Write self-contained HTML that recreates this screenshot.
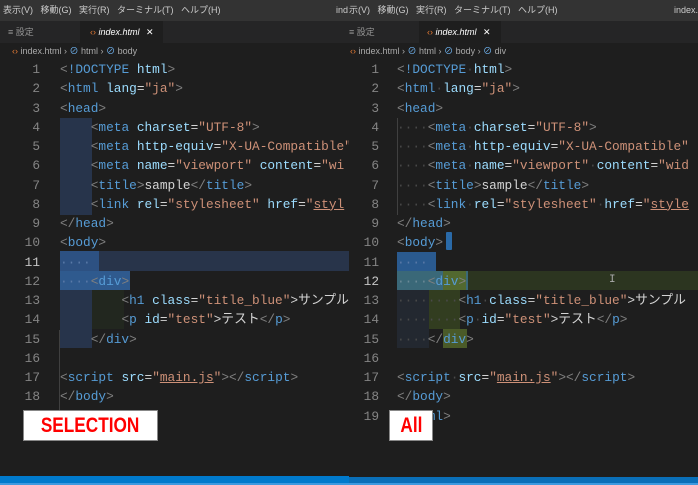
<!DOCTYPE html>
<html><head><meta charset="utf-8"><style>
*{margin:0;padding:0;box-sizing:border-box}
body{width:698px;height:485px;background:#1e1e1e;position:relative;overflow:hidden;font-family:"Liberation Sans","Noto Sans CJK JP",sans-serif}
.abs{position:absolute}
.menu{top:0;height:21px;background:#333333;color:#cccccc;font-size:9px;line-height:21px;white-space:nowrap;overflow:hidden}
.tabs{top:21px;height:22px;background:#252526}
.tab{position:absolute;top:0;height:22px;font-size:9px;line-height:22px;color:#969696;white-space:nowrap}
.tab.act{background:#1e1e1e;color:#ffffff;font-style:italic}
.bc{top:43px;height:16px;font-size:9px;line-height:16px;color:#a9a9a9;white-space:nowrap}
.code{font-family:"Liberation Mono","Noto Sans CJK JP",monospace;font-size:12.8px;white-space:pre;color:#d4d4d4}
.ln{position:absolute;width:30px;text-align:right;color:#858585;font-family:"Liberation Mono",monospace;font-size:12.8px}
.t{color:#569cd6}.b{color:#808080}.a{color:#9cdcfe}.v{color:#ce9178}.u{text-decoration:underline;text-decoration-color:#ce9178}
.d{color:#4a4a4a}
.hl{position:absolute}
.lbl{position:absolute;top:410px;height:31px;background:#fff;border:1px solid #888;color:#ff0000;font-weight:bold;font-size:21px;line-height:30px;text-align:center;overflow:hidden}
.lbl span{display:inline-block;transform:scaleX(0.82)}
</style></head><body>

<div class="abs menu" style="left:0;width:349px;padding-left:3px">表示(V) &nbsp; 移動(G) &nbsp; 実行(R) &nbsp; ターミナル(T) &nbsp; ヘルプ(H)<span style="position:absolute;left:336px">ind</span></div>
<div class="abs menu" style="left:349px;width:349px;"><span style="position:absolute;left:0">示(V) &nbsp; 移動(G) &nbsp; 実行(R) &nbsp; ターミナル(T) &nbsp; ヘルプ(H)</span><span style="position:absolute;left:325px">index.h</span></div>

<div class="abs tabs" style="left:0;width:349px">
<div class="tab" style="left:8px">≡ 設定</div>
<div class="tab act" style="left:80px;width:83px;padding-left:10px"><span style="color:#e37933;font-style:normal">‹›</span> index.html <span style="font-style:normal;margin-left:4px">✕</span></div>
</div>
<div class="abs tabs" style="left:349px;width:349px">
<div class="tab" style="left:0px">≡ 設定</div>
<div class="tab act" style="left:70px;width:82px;padding-left:8px"><span style="color:#e37933;font-style:normal">‹›</span> index.html <span style="font-style:normal;margin-left:4px">✕</span></div>
</div>

<div class="abs bc" style="left:12px"><span style="color:#e37933">‹›</span> index.html › <span style="color:#75beff">⊘</span> html › <span style="color:#75beff">⊘</span> body</div>
<div class="abs bc" style="left:350px"><span style="color:#e37933">‹›</span> index.html › <span style="color:#75beff">⊘</span> html › <span style="color:#75beff">⊘</span> body › <span style="color:#75beff">⊘</span> div</div>

<div class="hl" style="left:60px;top:118px;width:32px;height:97px;background:#27344b"></div>
<div class="hl" style="left:60px;top:251px;width:289px;height:20px;background:#28344a"></div>
<div class="hl" style="left:60px;top:251px;width:39px;height:20px;background:#2d5182"></div>
<div class="hl" style="left:60px;top:271px;width:70px;height:19px;background:#2f5a8e"></div>
<div class="hl" style="left:60px;top:290px;width:32px;height:58px;background:#27344b"></div>
<div class="hl" style="left:92px;top:290px;width:32px;height:39px;background:#22271f"></div>
<div class="hl" style="left:59px;top:330px;width:1px;height:80px;background:#404040"></div>

<div class="hl" style="left:446px;top:232px;width:6px;height:18px;background:#2a6aa8;border-radius:1px"></div>
<div class="hl" style="left:397px;top:252px;width:39px;height:19px;background:#2a5a8f"></div>
<div class="hl" style="left:397px;top:271px;width:301px;height:19px;background:#2c3520"></div>
<div class="hl" style="left:397px;top:271px;width:71px;height:19px;background:#3a6878"></div>
<div class="hl" style="left:443px;top:271px;width:23px;height:19px;background:#52682f"></div>
<div class="hl" style="left:397px;top:290px;width:32px;height:58px;background:#232830"></div>
<div class="hl" style="left:429px;top:290px;width:31px;height:39px;background:#323d20"></div>
<div class="hl" style="left:443px;top:329px;width:24px;height:19px;background:#4a5a28"></div>
<div class="hl" style="left:397px;top:118px;width:1px;height:97px;background:#404040"></div>

<div class="code">
<div class="abs" style="left:0;top:0;width:349px;height:476px;overflow:hidden">
<div class="ln" style="top:60px;left:10px;line-height:19.25px">1<br>2<br>3<br>4<br>5<br>6<br>7<br>8<br>9<br>10<br><span style="color:#c6c6c6">11</span><br>12<br>13<br>14<br>15<br>16<br>17<br>18</div>
<div class="abs" style="left:60px;top:60px;line-height:19.25px"><span class="b">&lt;</span><span class="t">!DOCTYPE</span> <span class="a">html</span><span class="b">&gt;</span>
<span class="b">&lt;</span><span class="t">html</span> <span class="a">lang</span>=<span class="v">"ja"</span><span class="b">&gt;</span>
<span class="b">&lt;</span><span class="t">head</span><span class="b">&gt;</span>
    <span class="b">&lt;</span><span class="t">meta</span> <span class="a">charset</span>=<span class="v">"UTF-8"</span><span class="b">&gt;</span>
    <span class="b">&lt;</span><span class="t">meta</span> <span class="a">http-equiv</span>=<span class="v">"X-UA-Compatible"</span>
    <span class="b">&lt;</span><span class="t">meta</span> <span class="a">name</span>=<span class="v">"viewport"</span> <span class="a">content</span>=<span class="v">"wi</span>
    <span class="b">&lt;</span><span class="t">title</span><span class="b">&gt;</span>sample<span class="b">&lt;/</span><span class="t">title</span><span class="b">&gt;</span>
    <span class="b">&lt;</span><span class="t">link</span> <span class="a">rel</span>=<span class="v">"stylesheet"</span> <span class="a">href</span>=<span class="v">"<span class="u">styl</span></span>
<span class="b">&lt;/</span><span class="t">head</span><span class="b">&gt;</span>
<span class="b">&lt;</span><span class="t">body</span><span class="b">&gt;</span>
<span class="d" style="color:#5a7aa8">····</span>
<span class="d" style="color:#5a7aa8">····</span><span class="b">&lt;</span><span class="t">div</span><span class="b">&gt;</span>
        <span class="b">&lt;</span><span class="t">h1</span> <span class="a">class</span>=<span class="v">"title_blue"</span>&gt;サンプル
        <span class="b">&lt;</span><span class="t">p</span> <span class="a">id</span>=<span class="v">"test"</span>&gt;テスト<span class="b">&lt;/</span><span class="t">p</span><span class="b">&gt;</span>
    <span class="b">&lt;/</span><span class="t">div</span><span class="b">&gt;</span>

<span class="b">&lt;</span><span class="t">script</span> <span class="a">src</span>=<span class="v">"<span class="u">main.js</span>"</span><span class="b">&gt;&lt;/</span><span class="t">script</span><span class="b">&gt;</span>
<span class="b">&lt;/</span><span class="t">body</span><span class="b">&gt;</span></div>
</div>

<div class="abs" style="left:349px;top:0;width:349px;height:476px;overflow:hidden">
<div class="ln" style="top:60px;left:0px;line-height:19.25px">1<br>2<br>3<br>4<br>5<br>6<br>7<br>8<br>9<br>10<br>11<br><span style="color:#c6c6c6">12</span><br>13<br>14<br>15<br>16<br>17<br>18<br>19</div>
<div class="abs" style="left:48px;top:60px;line-height:19.25px"><span class="b">&lt;</span><span class="t">!DOCTYPE</span><span class="d">·</span><span class="a">html</span><span class="b">&gt;</span>
<span class="b">&lt;</span><span class="t">html</span><span class="d">·</span><span class="a">lang</span>=<span class="v">"ja"</span><span class="b">&gt;</span>
<span class="b">&lt;</span><span class="t">head</span><span class="b">&gt;</span>
<span class="d">····</span><span class="b">&lt;</span><span class="t">meta</span><span class="d">·</span><span class="a">charset</span>=<span class="v">"UTF-8"</span><span class="b">&gt;</span>
<span class="d">····</span><span class="b">&lt;</span><span class="t">meta</span><span class="d">·</span><span class="a">http-equiv</span>=<span class="v">"X-UA-Compatible"</span>
<span class="d">····</span><span class="b">&lt;</span><span class="t">meta</span><span class="d">·</span><span class="a">name</span>=<span class="v">"viewport"</span><span class="d">·</span><span class="a">content</span>=<span class="v">"wid</span>
<span class="d">····</span><span class="b">&lt;</span><span class="t">title</span><span class="b">&gt;</span>sample<span class="b">&lt;/</span><span class="t">title</span><span class="b">&gt;</span>
<span class="d">····</span><span class="b">&lt;</span><span class="t">link</span><span class="d">·</span><span class="a">rel</span>=<span class="v">"stylesheet"</span><span class="d">·</span><span class="a">href</span>=<span class="v">"<span class="u">style</span></span>
<span class="b">&lt;/</span><span class="t">head</span><span class="b">&gt;</span>
<span class="b">&lt;</span><span class="t">body</span><span class="b">&gt;</span>
<span class="d" style="color:#5a7aa8">····</span>
<span class="d" style="color:#6a8a98">····</span><span class="b">&lt;</span><span class="t">div</span><span class="b">&gt;</span>
<span class="d">········</span><span class="b">&lt;</span><span class="t">h1</span><span class="d">·</span><span class="a">class</span>=<span class="v">"title_blue"</span>&gt;サンプル
<span class="d">········</span><span class="b">&lt;</span><span class="t">p</span><span class="d">·</span><span class="a">id</span>=<span class="v">"test"</span>&gt;テスト<span class="b">&lt;/</span><span class="t">p</span><span class="b">&gt;</span>
<span class="d">····</span><span class="b">&lt;/</span><span class="t">div</span><span class="b">&gt;</span>

<span class="b">&lt;</span><span class="t">script</span><span class="d">·</span><span class="a">src</span>=<span class="v">"<span class="u">main.js</span>"</span><span class="b">&gt;&lt;/</span><span class="t">script</span><span class="b">&gt;</span>
<span class="b">&lt;/</span><span class="t">body</span><span class="b">&gt;</span>
<span class="b">&lt;/</span><span class="t">html</span><span class="b">&gt;</span></div>
<div class="abs" style="left:260px;top:274px;color:#aaa;font-size:11px">I</div>
</div>
</div>

<div class="lbl" style="left:23px;width:135px"><span>SELECTION</span></div>
<div class="lbl" style="left:389px;width:44px"><span>All</span></div>

<div class="abs" style="left:0;top:476px;width:349px;height:9px;background:#007acc"></div>
<div class="abs" style="left:349px;top:477px;width:349px;height:8px;background:#0a6fb8"></div>
<div class="abs" style="left:0;top:483px;width:698px;height:2px;background:#3d9ae0"></div>
</body></html>
